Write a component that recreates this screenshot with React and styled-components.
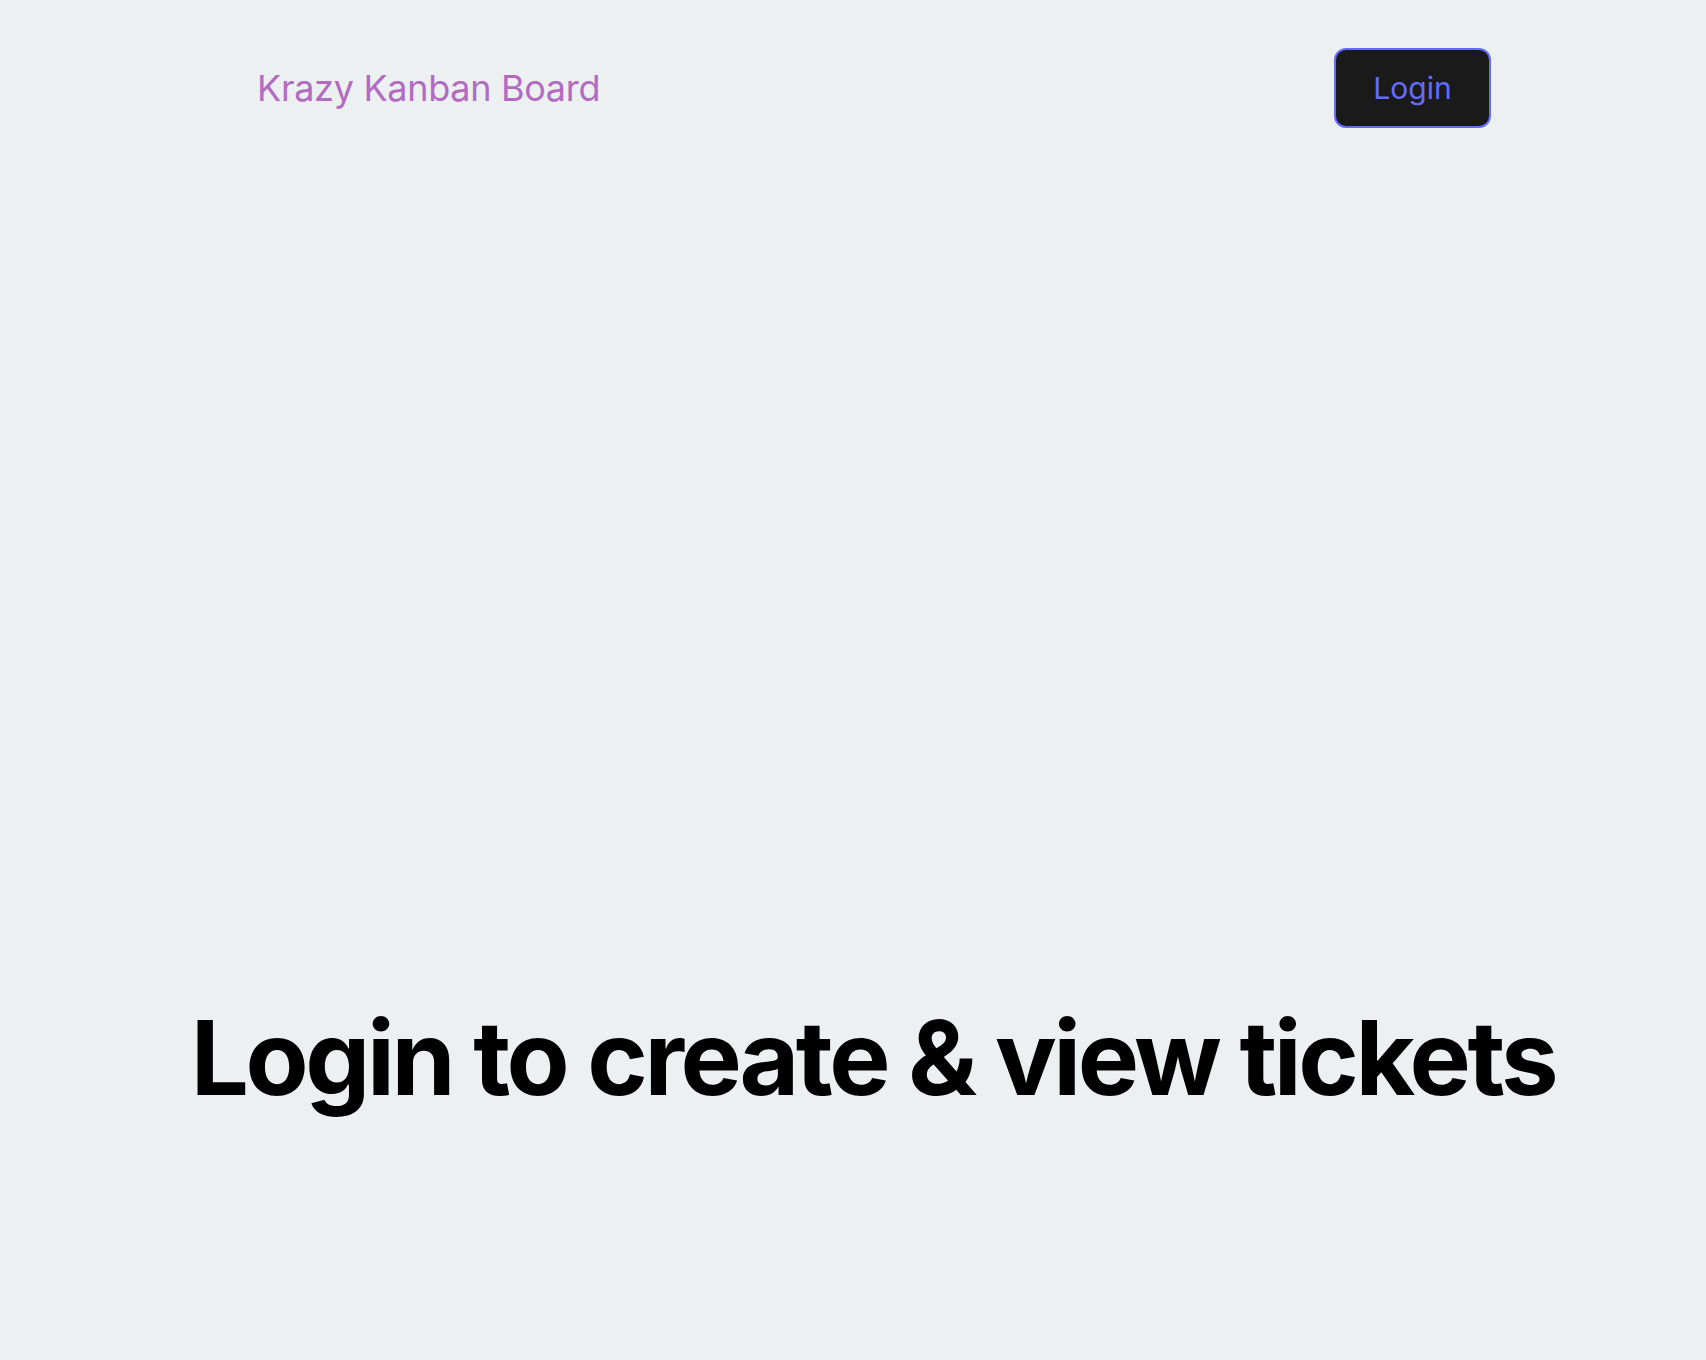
import React from "react";
import styled, { createGlobalStyle } from "styled-components";

const Global = createGlobalStyle`
  html, body { margin: 0; padding: 0; }
  body {
    background: #ecf0f1;
    font-family: Inter, "Noto Sans", sans-serif;
    min-height: 1360px;
  }
`;

const Page = styled.div`
  min-height: 1360px;
  display: flex;
  flex-direction: column;
`;

const Nav = styled.nav`
  display: flex;
  align-items: center;
  justify-content: space-between;
  padding: 48px 215px 0 257px;
  height: 80px;
`;

const Brand = styled.a`
  color: #b26bc2;
  font-size: 36px;
  font-weight: 400;
  text-decoration: none;
  letter-spacing: -0.3px;
`;

const LoginButton = styled.button`
  box-sizing: border-box;
  width: 157px;
  height: 80px;
  border-radius: 12px;
  border: 2px solid #646cff;
  background: #1a1a1a;
  color: #646cff;
  font-family: Inter, sans-serif;
  font-size: 30px;
  font-weight: 400;
  cursor: pointer;
`;

const Main = styled.main`
  flex: 1;
  display: flex;
  justify-content: center;
  padding: 868px 0 0 40px;
`;

const Heading = styled.h1`
  margin: 0;
  font-size: 103px;
  font-weight: 700;
  color: #000;
  letter-spacing: -3.4px;
  line-height: 1.2;
  white-space: nowrap;
`;

export default function App() {
  return (
    <Page>
      <Global />
      <Nav>
        <Brand href="#">Krazy Kanban Board</Brand>
        <LoginButton>Login</LoginButton>
      </Nav>
      <Main>
        <Heading>Login to create &amp; view tickets</Heading>
      </Main>
    </Page>
  );
}
